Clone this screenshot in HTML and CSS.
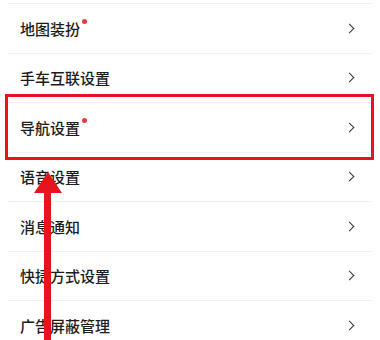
FILE: index.html
```html
<!DOCTYPE html>
<html lang="zh-CN">
<head>
  <meta charset="UTF-8" />
  <meta name="viewport" content="width=device-width, initial-scale=1.0"/>
  <title>设置</title>
  <link rel="stylesheet" href="styles.css">
</head>
<body>
<div class="page">
  <ul class="menu">
    <li class="row"><span class="label">地图装扮<i class="dot"></i></span><span class="chev"></span></li>
    <li class="row"><span class="label">手车互联设置</span><span class="chev"></span></li>
    <li class="row"><span class="label">导航设置<i class="dot"></i></span><span class="chev"></span></li>
    <li class="row"><span class="label">语音设置</span><span class="chev"></span></li>
    <li class="row"><span class="label">消息通知</span><span class="chev"></span></li>
    <li class="row"><span class="label">快捷方式设置</span><span class="chev"></span></li>
    <li class="row"><span class="label">广告屏蔽管理</span><span class="chev"></span></li>
  </ul>

  <!-- annotation overlay -->
  <div class="highlight"></div>
  <svg class="arrow" width="40" height="170" viewBox="0 0 40 170">
    <polygon points="15,0 1,21 11,21 11,170 18,170 18,21 29,21" fill="#e8141b"/>
  </svg>
</div>
</body>
</html>
```

FILE: styles.css
```css
body {
  margin: 0;
  background: #fff;
  font-family: "Noto Sans CJK SC", "Noto Sans", sans-serif;
  color: #1c1c1c;
}

.page {
  position: relative;
  width: 380px;
  height: 340px;
  overflow: hidden;
}

.menu {
  list-style: none;
  margin: 3px 0 0;
  padding: 0;
}

.row {
  display: flex;
  align-items: center;
  justify-content: space-between;
  height: 49.5px;
  box-sizing: border-box;
  margin: 0 8px;
  padding: 0 17px 0 12px;
  border-top: 1px solid #f1f1f1;
}

.label {
  position: relative;
  font-size: 15px;
  font-weight: 500;
  letter-spacing: 0;
}

.dot {
  position: absolute;
  top: 1px;
  right: -7px;
  width: 5px;
  height: 5px;
  border-radius: 50%;
  background: #ea3a3a;
}

.chev {
  width: 6px;
  height: 6px;
  border-top: 1.6px solid #333;
  border-right: 1.6px solid #333;
  transform: rotate(45deg);
  margin-right: 2px;
}

.highlight {
  position: absolute;
  left: 5px;
  top: 94px;
  width: 363px;
  height: 60px;
  border: 3px solid #e0151d;
}

.arrow {
  position: absolute;
  left: 33px;
  top: 172px;
}
```
